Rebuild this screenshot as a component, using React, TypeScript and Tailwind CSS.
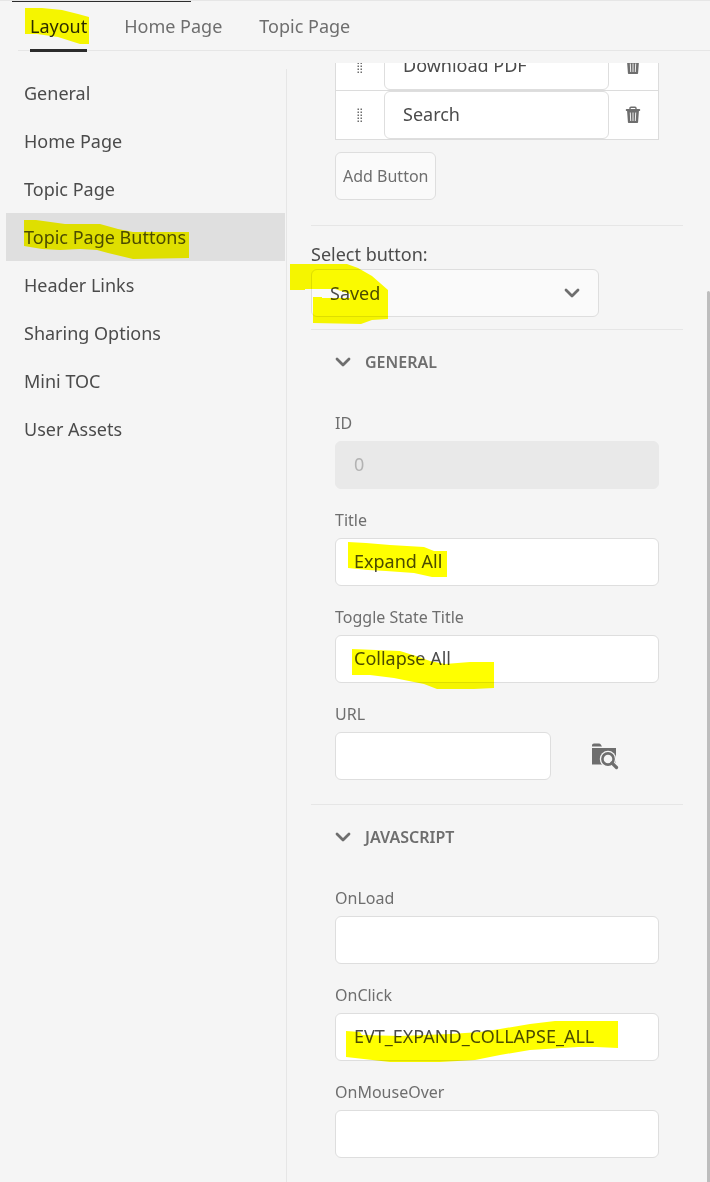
import { useState } from 'react';
import type { ReactNode } from 'react';
import clsx from 'clsx';

const tabs = ['Layout', 'Home Page', 'Topic Page'];

const menuItems = [
  'General',
  'Home Page',
  'Topic Page',
  'Topic Page Buttons',
  'Header Links',
  'Sharing Options',
  'Mini TOC',
  'User Assets',
];

const inputStyle =
  'h-12 w-full min-w-0 rounded-md border border-[#dedede] bg-white px-[18px] pb-0.5 text-lg text-[#4b4b4b] outline-none';

interface MarkerProps {
  className: string;
  viewBox: string;
  points: string;
}
const Marker = ({ className, viewBox, points }: MarkerProps) => (
  <svg
    aria-hidden="true"
    viewBox={viewBox}
    className={clsx('pointer-events-none absolute mix-blend-multiply', className)}
  >
    <polygon points={points} fill="#ffff00" />
  </svg>
);

const ChevronIcon = ({ className }: { className?: string }) => (
  <svg
    aria-hidden="true"
    viewBox="0 0 16 10"
    className={clsx('h-[10px] w-4 shrink-0', className)}
    fill="none"
    stroke="#6e6e6e"
    strokeWidth="2.8"
    strokeLinecap="round"
    strokeLinejoin="round"
  >
    <path d="M2 2l6 6 6-6" />
  </svg>
);

const TrashIcon = () => (
  <svg aria-hidden="true" viewBox="0 0 16 18" className="h-[18px] w-4">
    <path
      d="M5 3.500V2.300C5 1.700 5.400 1.300 6 1.300h4c.6 0 1 .4 1 1v1.200"
      fill="none"
      stroke="#6e6e6e"
      strokeWidth="1.4"
    />
    <rect x="0.8" y="3" width="14.4" height="2" rx="0.8" fill="#6e6e6e" />
    <path d="M2 4h12l-.9 12c0 .6-.5 1-1 1H3.900c-.5 0-1-.4-1-1z" fill="#6e6e6e" />
    <path
      d="M5.300 6.500l.4 8.500M8 6.500V15M10.700 6.500L10.300 15"
      stroke="#fff"
      strokeWidth="0.9"
    />
  </svg>
);

const DragIcon = () => (
  <svg aria-hidden="true" viewBox="0 0 6 15" className="h-[15px] w-[6px]" fill="#6e6e6e">
    {[0, 3, 6, 9, 12].map((y) => (
      <g key={y}>
        <rect x="0.5" y={y + 0.5} width="1.5" height="1.5" />
        <rect x="3.5" y={y + 0.5} width="1.5" height="1.5" />
      </g>
    ))}
  </svg>
);

const FolderSearchIcon = () => (
  <svg aria-hidden="true" viewBox="0 0 28 28" className="size-7">
    <path d="M1 3.500c0-1.200.8-2 2-2h5.200c.5 0 .9.200 1.200.6L11 4.500H1z" fill="#6e6e6e" />
    <path d="M1 6h24v16.500H1z" fill="#6e6e6e" />
    <circle cx="17" cy="17" r="8.200" fill="#f5f5f5" />
    <path d="M20 20l6 6" stroke="#f5f5f5" strokeWidth="5.500" />
    <circle cx="17" cy="17" r="5.600" fill="none" stroke="#6e6e6e" strokeWidth="2.600" />
    <path d="M21 21l4.500 4.500" stroke="#6e6e6e" strokeWidth="3.200" strokeLinecap="round" />
  </svg>
);

const ButtonRow = ({ name }: { name: string }) => (
  <div className="flex h-[49px] shrink-0 items-center border-b border-[#dcdcdc]">
    <button
      type="button"
      aria-label={`Move ${name}`}
      className="flex h-full w-12 items-center justify-center"
    >
      <DragIcon />
    </button>
    <input aria-label="Button name" defaultValue={name} className={clsx(inputStyle, 'flex-1')} />
    <button
      type="button"
      aria-label={`Delete ${name}`}
      className="flex h-full w-[49px] items-center justify-center pr-0.5"
    >
      <TrashIcon />
    </button>
  </div>
);

interface SectionProps {
  title: string;
  children: ReactNode;
}
const Section = ({ title, children }: SectionProps) => {
  const [open, setOpen] = useState(true);

  return (
    <section className="border-t border-[#e6e6e6] px-6 pb-6">
      <button
        type="button"
        aria-expanded={open}
        onClick={() => setOpen(!open)}
        className="flex h-16 w-full items-center gap-[14px] text-base font-semibold text-[#6e6e6e]"
      >
        <ChevronIcon />
        {title}
      </button>
      {open && <div className="flex flex-col gap-[19px] pt-[17px]">{children}</div>}
    </section>
  );
};

interface FieldProps {
  id: string;
  label: string;
  value?: string;
  disabled?: boolean;
  action?: ReactNode;
  marker?: ReactNode;
}
const Field = ({ id, label, value, disabled, action, marker }: FieldProps) => (
  <div className="flex flex-col">
    <label htmlFor={id} className="h-[30px] text-base leading-6 text-[#6e6e6e]">
      {label}
    </label>
    <div className="relative flex">
      <input
        id={id}
        defaultValue={value}
        disabled={disabled}
        className={clsx(
          inputStyle,
          'disabled:border-[#e9e9e9] disabled:bg-[#e9e9e9] disabled:text-[#b3b3b3]'
        )}
      />
      {action}
      {marker}
    </div>
  </div>
);

const App = () => {
  const [activeTab, setActiveTab] = useState('Layout');
  const [activeItem, setActiveItem] = useState('Topic Page Buttons');

  return (
    <div className="flex min-h-screen flex-col bg-[#f5f5f5] font-['Noto_Sans','Open_Sans',sans-serif] text-lg text-[#4b4b4b]">
      <header className="border-t border-[#e6e6e6]">
        <div className="ml-3 h-px w-[179px] bg-[#2c2c2c]" />
        <nav className="ml-[18px] flex h-[49px] gap-[37px] border-b border-[#e6e6e6] pl-3">
          {tabs.map((tab) => (
            <button
              key={tab}
              type="button"
              onClick={() => setActiveTab(tab)}
              className={clsx(
                'relative -mb-px h-[50px] border-b-3 pt-px',
                activeTab === tab
                  ? 'border-[#2c2c2c] text-[#2c2c2c]'
                  : 'border-transparent text-[#6e6e6e]'
              )}
            >
              {tab}
              {tab === 'Layout' && (
                <Marker
                  className="-left-[5px] top-[6px] h-9 w-16"
                  viewBox="0 0 64 36"
                  points="0,0 17,0 37,2 53,6 64,9 64,36 55,36 33,29 12,26 0,26"
                />
              )}
            </button>
          ))}
        </nav>
      </header>

      <div className="flex flex-1">
        <aside className="mt-[18px] w-[287px] shrink-0 border-r border-[#e6e6e6] pr-px pl-[6px]">
          {menuItems.map((item) => (
            <button
              key={item}
              type="button"
              onClick={() => setActiveItem(item)}
              className={clsx(
                'relative block h-12 w-full pl-[18px] text-left',
                activeItem === item && 'bg-[#dfdfdf]'
              )}
            >
              {item}
              {item === 'Topic Page Buttons' && (
                <Marker
                  className="left-[18px] top-[7px] h-[39px] w-[165px]"
                  viewBox="0 0 165 39"
                  points="0,0 12,0 41,4 76,4 94,9 109,12 165,12 165,38 109,39 84,33 73,30 56,29 36,30 18,29 0,26"
                />
              )}
            </button>
          ))}
        </aside>

        <main className="mt-3 min-w-0 flex-1 px-6">
          <div className="px-6 pb-[25px]">
            <div className="flex h-[77px] flex-col justify-end overflow-hidden border-x border-[#dcdcdc] bg-white">
              <ButtonRow name="Download PDF" />
              <ButtonRow name="Search" />
            </div>
            <button
              type="button"
              className="mt-3 h-12 rounded-md border border-[#dedede] bg-[#fafafa] px-[7px] text-base text-[#6e6e6e]"
            >
              Add Button
            </button>
          </div>

          <div className="border-t border-[#e6e6e6] pt-[15px] pb-3">
            <label htmlFor="select-button" className="block h-7 leading-[26px]">
              Select button:
            </label>
            <div className="relative flex w-72 items-center">
              <select
                id="select-button"
                defaultValue="Saved"
                className="h-12 w-full appearance-none rounded-md border border-[#dedede] bg-[#fafafa] px-[18px] outline-none"
              >
                <option>Saved</option>
                <option>Download PDF</option>
                <option>Search</option>
              </select>
              <ChevronIcon className="pointer-events-none absolute right-[19px]" />
              <Marker
                className="-left-[21px] -top-[5px] h-[60px] w-[98px]"
                viewBox="0 0 98 60"
                points="0,0 57,0 68,4 82,12 98,26 98,55 82,56 71,60 23,59 23,33 32,33 32,34 60,34 60,30 45,25 15,25 15,26 0,26"
              />
            </div>
          </div>

          <Section title="GENERAL">
            <Field id="field-id" label="ID" value="0" disabled />
            <Field
              id="field-title"
              label="Title"
              value="Expand All"
              marker={
                <Marker
                  className="left-[13px] top-1 h-[35px] w-[99px]"
                  viewBox="0 0 99 35"
                  points="0,0 18,1 42,3 76,5 86,9 99,9 99,35 84,35 66,31 38,29 20,28 0,26"
                />
              }
            />
            <Field
              id="field-toggle-title"
              label="Toggle State Title"
              value="Collapse All"
              marker={
                <Marker
                  className="left-[17px] top-[14px] h-10 w-[142px]"
                  viewBox="0 0 142 40"
                  points="0,0 48,2 64,7 78,12 93,15 118,13 142,13 142,39 122,40 85,40 72,35 42,29 18,26 0,26"
                />
              }
            />
            <Field
              id="field-url"
              label="URL"
              action={
                <button
                  type="button"
                  aria-label="Browse"
                  className="mx-[30px] flex size-12 shrink-0 items-center justify-center"
                >
                  <FolderSearchIcon />
                </button>
              }
            />
          </Section>

          <Section title="JAVASCRIPT">
            <Field id="field-onload" label="OnLoad" />
            <Field
              id="field-onclick"
              label="OnClick"
              value="EVT_EXPAND_COLLAPSE_ALL"
              marker={
                <Marker
                  className="left-[11px] top-2 h-[41px] w-[272px]"
                  viewBox="0 0 272 41"
                  points="0,10 14,11 16,14 54,15 104,13 134,11 154,8 184,3 209,0 272,0 272,27 250,26 232,26 184,29 154,34 129,39 94,41 44,41 9,37 0,36"
                />
              }
            />
            <Field id="field-onmouseover" label="OnMouseOver" />
          </Section>
        </main>
        <div className="mt-60 w-[3px] shrink-0 rounded-t-sm bg-[#bdbdbd]" />
      </div>
    </div>
  );
};
export default App;
